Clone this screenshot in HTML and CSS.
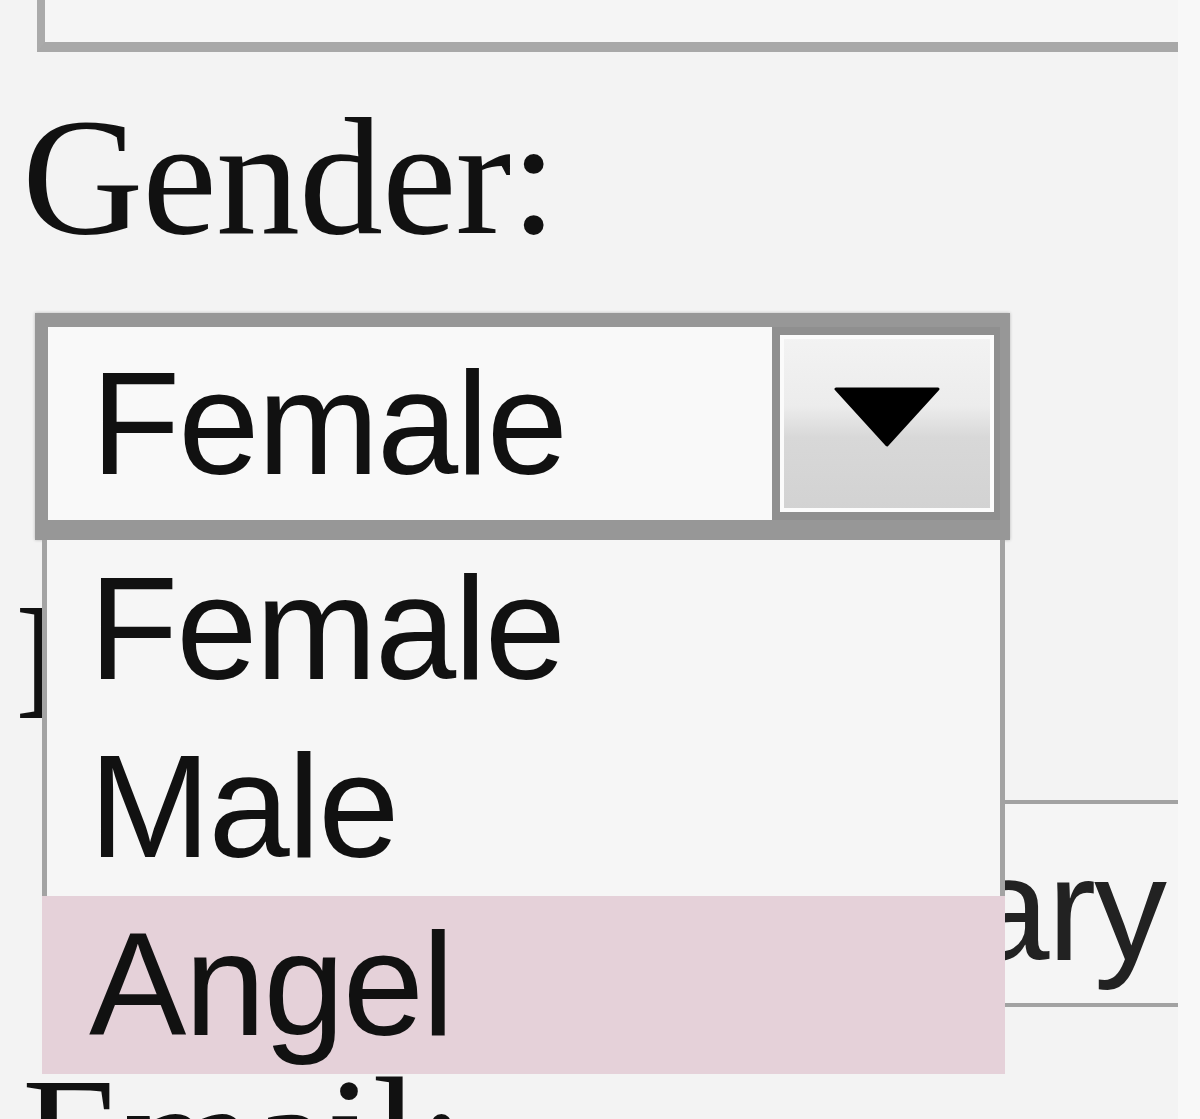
FILE: index.html
```html
<!DOCTYPE html>
<html lang="en">
<head>
<meta charset="utf-8">
<title>Gender select</title>
<link rel="stylesheet" href="styles.css">
</head>
<body>
<div class="page">
  <main class="form">
    <div class="field top-field"></div>

    <label class="label label-gender">Gender:</label>

    <div class="select-wrap">
      <div class="select">
        <span class="select-value">Female</span>
        <span class="select-btn">
          <svg class="caret" width="106" height="60" viewBox="0 0 106 60" aria-hidden="true">
            <polygon points="2,2 104,2 53,58" fill="#000" stroke="#000" stroke-width="3" stroke-linejoin="round"/>
          </svg>
        </span>
      </div>
      <ul class="dropdown">
        <li class="option">Female</li>
        <li class="option">Male</li>
        <li class="option option-active">Angel</li>
      </ul>
    </div>

    <label class="label label-mid">Income:</label>

    <div class="field text-field">Extraordinary</div>

    <label class="label label-email">Email:</label>
  </main>
  <div class="edge"></div>
</div>
</body>
</html>
```

FILE: styles.css
```css
html, body {
  margin: 0;
  padding: 0;
  height: 1119px;
  overflow: hidden;
  background: #f3f3f3;
}

.page {
  display: flex;
  height: 1119px;
}

.form {
  width: 1178px;
  flex: none;
  overflow: hidden;
  display: flex;
  flex-direction: column;
  align-items: flex-start;
}

.form > * {
  flex: none;
}

.edge {
  flex: 1;
  background: #f8f8f8;
}

.field {
  box-sizing: border-box;
  align-self: stretch;
  background: #f5f5f5;
}

.top-field {
  height: 52px;
  margin-left: 37px;
  border-left: 8px solid #aaaaaa;
  border-bottom: 10px solid #a8a8a8;
}

.label {
  display: block;
  font-family: "Liberation Serif", "Times New Roman", serif;
  font-size: 168px;
  line-height: 193px;
  color: #111;
  margin-left: 22px;
  letter-spacing: -1px;
}

.label-gender {
  margin-top: 28px;
}

.label-mid {
  margin-top: 25px;
  margin-left: 14px;
}

.label-email {
  margin-top: 33px;
}

.select-wrap {
  position: relative;
  margin-top: 40px;
  margin-left: 35px;
  width: 975px;
  z-index: 2;
}

.select {
  box-sizing: border-box;
  display: flex;
  height: 227px;
  border-style: solid;
  border-color: #979797;
  border-width: 14px 10px 20px 13px;
  background: #f9f9f9;
  box-shadow: 0 0 3px rgba(0,0,0,0.25);
}

.select-value {
  flex: 1;
  display: flex;
  align-items: center;
  padding-left: 43px;
  font-family: "Liberation Sans", Arial, sans-serif;
  font-size: 146px;
  letter-spacing: -2px;
  color: #111;
}

.select-btn {
  box-sizing: border-box;
  width: 228px;
  display: flex;
  align-items: center;
  justify-content: center;
  padding-bottom: 14px;
  border: 8px solid #8f8f8f;
  border-right-width: 6px;
  box-shadow: inset 0 0 0 4px #fbfbfb;
  background: linear-gradient(#f3f3f3 0%, #ececec 40%, #d8d8d8 58%, #d2d2d2 100%);
}

.caret {
  display: block;
}

.dropdown {
  position: absolute;
  top: 100%;
  left: 7px;
  width: 963px;
  margin: 0;
  padding: 0;
  list-style: none;
  background: #f6f6f6;
}

.option {
  box-sizing: border-box;
  height: 178px;
  line-height: 178px;
  padding-left: 42px;
  border-left: 5px solid #a3a3a3;
  border-right: 5px solid #a3a3a3;
  font-family: "Liberation Sans", Arial, sans-serif;
  font-size: 146px;
  letter-spacing: -2px;
  color: #111;
}

.option-active {
  border-color: transparent;
  background: #e5d1d9;
}

.text-field {
  margin-top: 42px;
  margin-left: 42px;
  height: 207px;
  border-top: 4px solid #a2a2a2;
  border-bottom: 4px solid #a2a2a2;
  border-left: 4px solid #a2a2a2;
  padding: 12px 13px 0 0;
  text-align: right;
  font-family: "Liberation Sans", Arial, sans-serif;
  font-size: 146px;
  line-height: 187px;
  letter-spacing: -2px;
  color: #222;
  white-space: nowrap;
}
```
